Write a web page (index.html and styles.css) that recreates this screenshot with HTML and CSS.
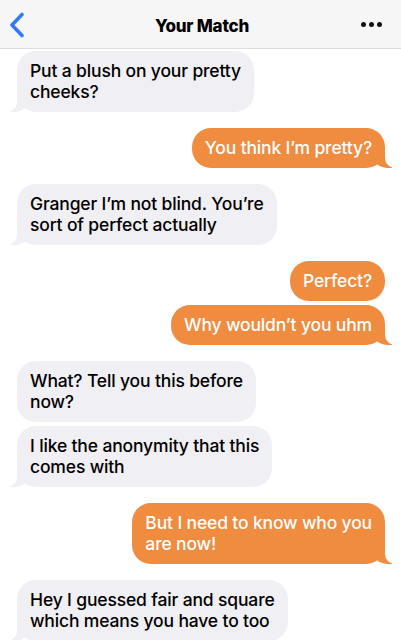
FILE: index.html
```html
<!DOCTYPE html>
<html>
<head>
<meta charset="utf-8">
<link rel="stylesheet" href="styles.css">
</head>
<body>
<div class="screen">
  <header class="nav">
    <svg class="back" width="16" height="26" viewBox="0 0 16 26"><path d="M13 2.5 L3 13 L13 23.5" fill="none" stroke="#3478f6" stroke-width="3.6" stroke-linecap="round" stroke-linejoin="round"/></svg>
    <div class="title">Your Match</div>
    <div class="more"><span></span><span></span><span></span></div>
  </header>
  <main class="chat">
    <div class="group them">
      <div class="msg tail">Put a blush on your pretty<br>cheeks?</div>
    </div>
    <div class="group me">
      <div class="msg tail">You think I’m pretty?</div>
    </div>
    <div class="group them">
      <div class="msg tail">Granger I’m not blind. You’re<br>sort of perfect actually</div>
    </div>
    <div class="group me">
      <div class="msg">Perfect?</div>
      <div class="msg tail">Why wouldn’t you uhm</div>
    </div>
    <div class="group them">
      <div class="msg">What? Tell you this before<br>now?</div>
      <div class="msg tail">I like the anonymity that this<br>comes with</div>
    </div>
    <div class="group me">
      <div class="msg tail">But I need to know who you<br>are now!</div>
    </div>
    <div class="group them">
      <div class="msg tail">Hey I guessed fair and square<br>which means you have to too</div>
    </div>
  </main>
</div>
</body>
</html>
```
FILE: styles.css
```css
* { box-sizing: border-box; }
html, body { margin: 0; padding: 0; background: #fff; }
body { font-family: Inter, "Liberation Sans", sans-serif; }
.screen { width: 401px; height: 640px; overflow: hidden; }
.nav {
  height: 49px;
  background: #f6f6f6;
  border-bottom: 1px solid #dcdcdc;
  display: flex;
  align-items: center;
  justify-content: space-between;
  padding: 0 19px 0 9px;
}
.back { display: block; margin-top: 1px; }
.title {
  font-size: 17px;
  font-weight: 800;
  color: #000;
  letter-spacing: -0.2px;
  margin-left: 18px;
  padding-top: 3px;
}
.more { display: flex; gap: 3px; padding-top: 1px; }
.more span { width: 5px; height: 5px; border-radius: 50%; background: #111; }
.chat {
  display: flex;
  flex-direction: column;
  gap: 16px;
  padding: 2px 16px 0 17px;
}
.group { display: flex; flex-direction: column; gap: 4px; }
.group.them { align-items: flex-start; }
.group.me { align-items: flex-end; }
.msg {
  position: relative;
  white-space: nowrap;
  padding: 9px 13px 10px;
  border-radius: 19px;
  font-size: 17.5px;
  font-weight: 500;
  line-height: 21px;
  letter-spacing: -0.15px;
}
.them .msg { background: #efeff4; color: #000; }
.me .msg { background: #ef8c40; color: #fff; }
.msg.tail::before, .msg.tail::after {
  content: "";
  position: absolute;
  bottom: 0;
  height: 20px;
}
.them .msg.tail::before {
  left: -7px; width: 20px; background: #efeff4;
  border-bottom-right-radius: 15px;
}
.them .msg.tail::after {
  left: -10px; width: 10px; background: #fff;
  border-bottom-right-radius: 10px;
}
.me .msg.tail::before {
  right: -7px; width: 20px; background: #ef8c40;
  border-bottom-left-radius: 15px;
}
.me .msg.tail::after {
  right: -10px; width: 10px; background: #fff;
  border-bottom-left-radius: 10px;
}
```
